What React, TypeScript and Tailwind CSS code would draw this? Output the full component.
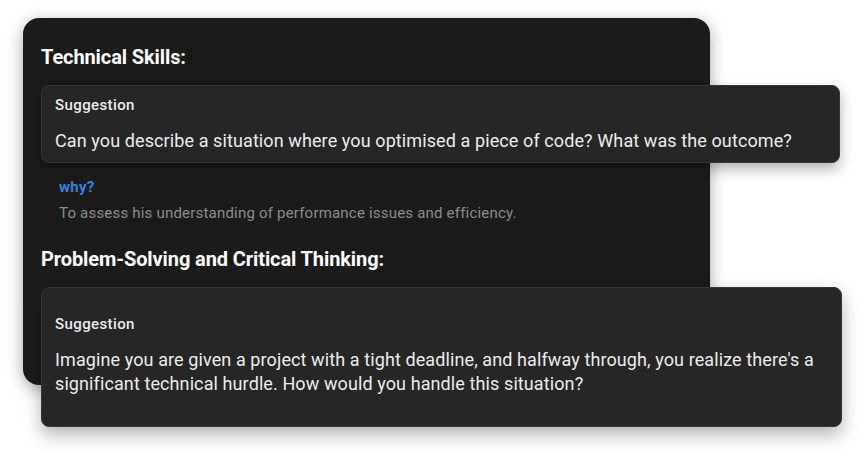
export default function App() {
  return (
    <div className="w-[865px] h-[455px] bg-white overflow-hidden pt-[18px] pl-[23px] font-['Roboto',sans-serif]">
      <div className="w-[687px] h-[367px] bg-[#1b1b1b] rounded-[16px] shadow-[0_4px_16px_rgba(0,0,0,0.35)] pt-[26px] pl-[18px]">
        <h3 className="text-[20px] leading-[26px] font-bold text-white tracking-[-0.1px]">Technical Skills:</h3>

        <div className="mt-[15px] w-[799px] rounded-[8px] bg-[#262626] border border-[#363636] shadow-[0_6px_14px_rgba(0,0,0,0.3)] px-[13px] pt-[9px] pb-[9px]">
          <div className="text-[15px] leading-[20px] font-medium text-[#ececec] tracking-[0.4px]">Suggestion</div>
          <p className="mt-[14px] text-[18px] leading-[24px] text-[#ececec] tracking-[0.1px]">
            Can you describe a situation where you optimised a piece of code? What was the outcome?
          </p>
        </div>

        <div className="pl-[18px] mt-[14px]">
          <div className="text-[15px] leading-[20px] font-bold text-[#3d7fd9] tracking-[0.3px]">why?</div>
          <p className="mt-[6px] text-[15px] leading-[20px] text-[#8c8c8c] tracking-[0.2px]">
            To assess his understanding of performance issues and efficiency.
          </p>
        </div>

        <h3 className="mt-[23px] text-[20px] leading-[26px] font-bold text-white tracking-[-0.1px]">
          Problem-Solving and Critical Thinking:
        </h3>

        <div className="mt-[15px] w-[801px] rounded-[8px] bg-[#262626] border border-[#363636] shadow-[0_8px_18px_rgba(0,0,0,0.3)] px-[13px] pt-[26px] pb-[30px]">
          <div className="text-[15px] leading-[20px] font-medium text-[#ececec] tracking-[0.4px]">Suggestion</div>
          <p className="mt-[14px] text-[18px] leading-[24px] text-[#ececec] tracking-[0.1px]">
            Imagine you are given a project with a tight deadline, and halfway through, you realize there's a
            significant technical hurdle. How would you handle this situation?
          </p>
        </div>
      </div>
    </div>
  )
}
